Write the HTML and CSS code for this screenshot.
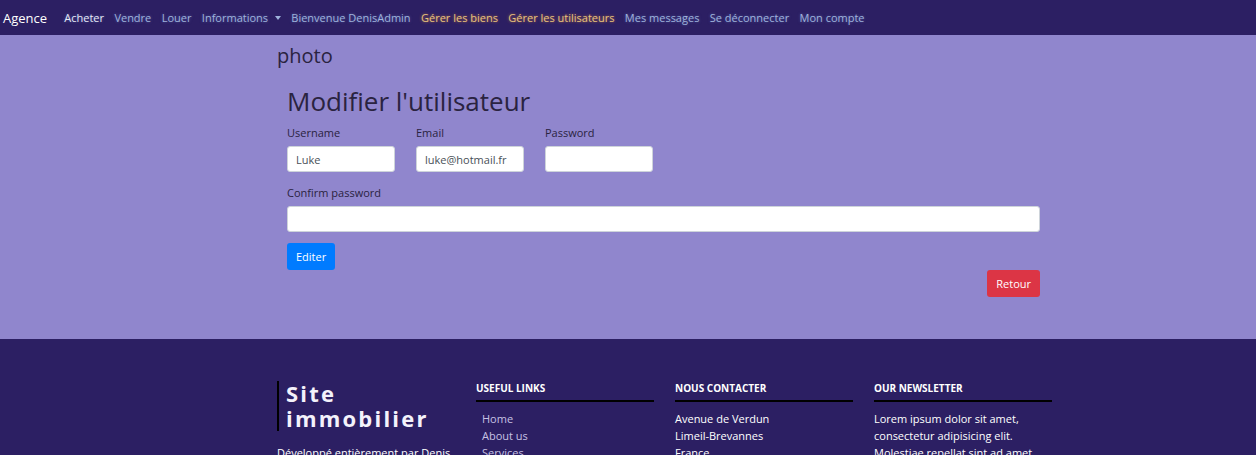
FILE: index.html
```html
<!DOCTYPE html>
<html lang="fr">
<head>
<meta charset="utf-8">
<title>Agence</title>
<link rel="stylesheet" href="styles.css">
</head>
<body>
<nav class="navbar">
  <a class="brand" href="#">Agence</a>
  <ul class="nav">
    <li><a class="nav-link active" href="#">Acheter</a></li>
    <li><a class="nav-link" href="#">Vendre</a></li>
    <li><a class="nav-link" href="#">Louer</a></li>
    <li><a class="nav-link dropdown" href="#">Informations <span class="caret"></span></a></li>
    <li><a class="nav-link" href="#">Bienvenue DenisAdmin</a></li>
    <li><a class="nav-link admin" href="#">Gérer les biens</a></li>
    <li><a class="nav-link admin" href="#">Gérer les utilisateurs</a></li>
    <li><a class="nav-link" href="#">Mes messages</a></li>
    <li><a class="nav-link" href="#">Se déconnecter</a></li>
    <li><a class="nav-link" href="#">Mon compte</a></li>
  </ul>
</nav>

<main class="main">
  <div class="container">
    <div class="photo">photo</div>
    <form class="edit-form">
      <h1 class="form-title">Modifier l'utilisateur</h1>
      <div class="form-row">
        <div class="field">
          <label class="label">Username</label>
          <input class="input" type="text" value="Luke">
        </div>
        <div class="field">
          <label class="label">Email</label>
          <input class="input" type="text" value="luke@hotmail.fr">
        </div>
        <div class="field">
          <label class="label">Password</label>
          <input class="input" type="password" value="">
        </div>
      </div>
      <div class="field wide">
        <label class="label">Confirm password</label>
        <input class="input" type="password" value="">
      </div>
      <div class="actions">
        <button class="btn btn-primary" type="button">Editer</button>
      </div>
      <div class="back-row">
        <button class="btn btn-danger" type="button">Retour</button>
      </div>
    </form>
  </div>
</main>

<footer class="footer">
  <div class="footer-grid">
    <div class="footer-col">
      <div class="site-title"><div>Site</div><div>immobilier</div></div>
      <p class="footer-about">Développé entièrement par Denis</p>
    </div>
    <div class="footer-col">
      <h4 class="footer-heading">Useful links</h4>
      <ul class="footer-links">
        <li><a href="#">Home</a></li>
        <li><a href="#">About us</a></li>
        <li><a href="#">Services</a></li>
      </ul>
    </div>
    <div class="footer-col">
      <h4 class="footer-heading">Nous contacter</h4>
      <p class="footer-text">Avenue de Verdun<br>Limeil-Brevannes<br>France</p>
    </div>
    <div class="footer-col">
      <h4 class="footer-heading">Our newsletter</h4>
      <p class="footer-text">Lorem ipsum dolor sit amet,<br>consectetur adipisicing elit.<br>Molestiae repellat sint ad amet</p>
    </div>
  </div>
</footer>
</body>
</html>
```

FILE: styles.css
```css
* { box-sizing: border-box; }

body {
  margin: 0;
  font-family: "Open Sans", "Noto Sans", sans-serif;
  background: #9086cd;
  color: #2a2340;
}

a { text-decoration: none; }

.navbar {
  height: 35px;
  background: #2c1f63;
  display: flex;
  align-items: center;
  padding-left: 3px;
}

.brand {
  color: #ffffff;
  font-size: 13px;
  margin-right: 12px;
}

.nav {
  list-style: none;
  margin: 0;
  padding: 0;
  display: flex;
  align-items: center;
}

.nav-link {
  display: block;
  font-size: 11px;
  color: #9fb3dc;
  padding: 0 5.2px;
  text-shadow: 0 0 3px rgba(120, 150, 220, 0.5);
}

.nav-link.active { color: #e6e9f5; }

.nav-link.admin {
  color: #e9c27c;
  text-shadow: 0 0 3px rgba(230, 150, 60, 0.7);
}

.caret {
  display: inline-block;
  margin-left: 4px;
  vertical-align: 2px;
  border-top: 4px solid #9fb3dc;
  border-left: 3.5px solid transparent;
  border-right: 3.5px solid transparent;
}

.main {
  height: 304px;
}

.container {
  margin-left: 277px;
  padding-top: 9px;
}

.photo {
  font-size: 20px;
  line-height: 24px;
  color: #2a2340;
}

.edit-form {
  margin-left: 10px;
  width: 753px;
  padding-top: 17px;
}

.form-title {
  margin: 0 0 8px;
  font-size: 26px;
  font-weight: 400;
  line-height: 32px;
  color: #2a2340;
}

.form-row {
  display: flex;
  gap: 21px;
}

.field {
  display: flex;
  flex-direction: column;
  width: 108px;
}

.field.wide {
  width: 753px;
  margin-top: 13px;
}

.label {
  font-size: 11px;
  line-height: 15px;
  margin-bottom: 6px;
  color: #2a2340;
}

.input {
  height: 26px;
  border: 1px solid #ced4da;
  border-radius: 3px;
  background: #fff;
  font-family: inherit;
  font-size: 11px;
  color: #495057;
  padding: 0 8px;
}

.actions {
  margin-top: 11px;
}

.btn {
  font-family: inherit;
  font-size: 11px;
  color: #fff;
  border: none;
  border-radius: 3px;
  height: 27px;
  padding: 0 9px;
}

.btn-primary { background: #007bff; }
.btn-danger { background: #dc3545; }

.back-row {
  display: flex;
  justify-content: flex-end;
}

.footer {
  background: #2c1f63;
  height: 200px;
  padding-top: 42px;
  color: #fff;
}

.footer-grid {
  margin-left: 277px;
  display: grid;
  grid-template-columns: repeat(4, 178px);
  column-gap: 21px;
}

.site-title {
  border-left: 2px solid #000;
  padding-left: 7px;
  font-size: 22px;
  font-weight: 700;
  letter-spacing: 2.2px;
  line-height: 25px;
  color: #f4f2fb;
}

.footer-about {
  font-size: 11px;
  margin: 14px 0 0;
}

.footer-heading {
  margin: 0;
  font-size: 10px;
  font-weight: 700;
  text-transform: uppercase;
  line-height: 14px;
  padding-bottom: 5px;
  border-bottom: 2px solid #000;
}

.footer-links {
  list-style: none;
  margin: 8px 0 0;
  padding: 0 0 0 6px;
  font-size: 11px;
  line-height: 17px;
}

.footer-links a { color: #c7c2e3; }

.footer-text {
  margin: 8px 0 0;
  font-size: 11px;
  line-height: 17px;
}
```
